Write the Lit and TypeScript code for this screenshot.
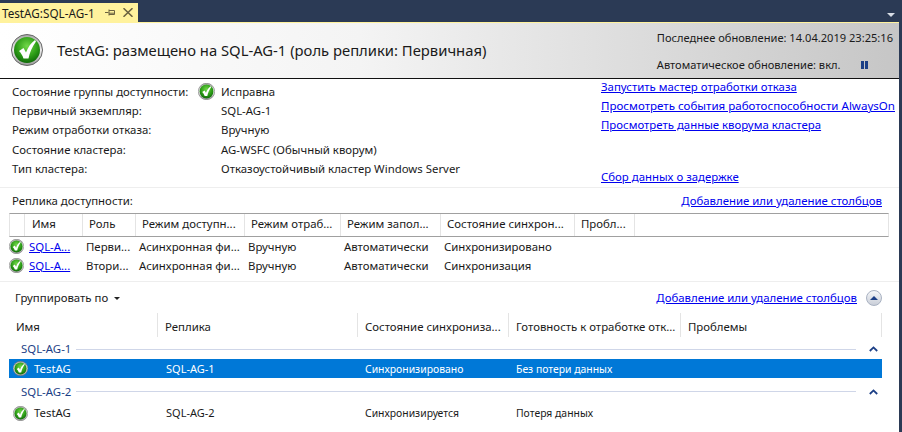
import { css, html, LitElement, svg } from 'lit';

const statusIcon = (size: number) => html`
  <svg class="status" width=${size} height=${size} viewBox="0 0 32 32">
    <defs>
      <radialGradient id="ok" cx="0.5" cy="0.35" r="0.65">
        <stop offset="0" stop-color="#72d84a" />
        <stop offset="0.6" stop-color="#2f9f18" />
        <stop offset="1" stop-color="#0f6b08" />
      </radialGradient>
      <linearGradient id="ring" x1="0" y1="0" x2="0" y2="1">
        <stop offset="0" stop-color="#a8a8a8" />
        <stop offset="0.5" stop-color="#ececec" />
        <stop offset="1" stop-color="#9a9a9a" />
      </linearGradient>
    </defs>
    <circle cx="16" cy="16" r="15.5" fill="url(#ring)" stroke="#666" stroke-width="1" />
    <circle cx="16" cy="16" r="13" fill="url(#ok)" />
    ${svg`<path d="M8 17l4.5-3 2.5 4.5C17 13 20 9 24 6l1 1.5C21 13 18.5 19 17.5 24.5h-5C11.5 21.5 10 19 8 17z" fill="#fff" />`}
  </svg>
`;

const chevronUp = html`
  <svg class="chevron" width="9" height="6" viewBox="0 0 9 6">
    <path d="M0.8 5L4.5 1.4 8.2 5" fill="none" stroke="#1c3f86" stroke-width="1.8" />
  </svg>
`;

const summary = [
  ['Состояние группы доступности:', 'Исправна', true],
  ['Первичный экземпляр:', 'SQL-AG-1', false],
  ['Режим отработки отказа:', 'Вручную', false],
  ['Состояние кластера:', 'AG-WSFC (Обычный кворум)', false],
  ['Тип кластера:', 'Отказоустойчивый кластер Windows Server', false],
] as const;

const replicaHead = ['Имя', 'Роль', 'Режим доступн...', 'Режим отраб...', 'Режим запол...', 'Состояние синхрон...', 'Пробл...'];
const replicaRows = [
  ['Перви...', 'Асинхронная фи...', 'Вручную', 'Автоматически', 'Синхронизировано'],
  ['Втори...', 'Асинхронная фи...', 'Вручную', 'Автоматически', 'Синхронизация'],
];
const dbHead = ['Имя', 'Реплика', 'Состояние синхрониза...', 'Готовность к отработке отк...', 'Проблемы'];

export class AppRoot extends LitElement {
  static styles = css`
    :host {
      display: block;
      width: 902px;
      height: 432px;
      overflow: hidden;
      background: #2b3a55;
      font-family: 'Noto Sans', sans-serif;
      font-size: 11.4px;
      line-height: 16px;
      color: #1a1a1a;
    }

    a {
      color: #0000ee;
      text-decoration: underline;
      white-space: nowrap;
    }

    svg {
      display: block;
      flex: none;
    }

    .tabbar {
      height: 22px;
      display: flex;
      align-items: flex-end;
      justify-content: space-between;
    }

    .tab {
      width: 138px;
      height: 19px;
      box-sizing: border-box;
      padding-left: 2px;
      display: flex;
      align-items: center;
      gap: 11px;
      background: #fff29d;
      font-size: 11.7px;
      white-space: nowrap;
    }

    .tab-icons {
      display: flex;
      align-items: center;
      gap: 8px;
      margin-left: -1px;
    }

    .menu-arrow {
      width: 0;
      height: 0;
      margin: 0 7px 5px 0;
      border-left: 4px solid transparent;
      border-right: 4px solid transparent;
      border-top: 4px solid #d8dde6;
    }

    .page {
      width: 899px;
      height: 410px;
      background: #fff;
      border-top: 1px solid #fff29d;
      box-sizing: border-box;
    }

    .banner {
      height: 56px;
      box-sizing: border-box;
      display: flex;
      align-items: stretch;
      justify-content: space-between;
      padding: 0 6px 0 11px;
      border-bottom: 1px solid #111;
      background: linear-gradient(90deg, #ffffff 0%, #f4f4f4 40%, #c6c6c6 100%);
    }

    .banner-title {
      display: flex;
      align-items: center;
      gap: 14px;
      font-size: 14.8px;
      padding-bottom: 2px;
      white-space: nowrap;
    }

    .banner-info {
      padding-top: 7px;
      display: flex;
      flex-direction: column;
      gap: 11px;
      font-size: 11.1px;
      white-space: nowrap;
    }

    .auto {
      display: flex;
      align-items: center;
      gap: 20px;
    }

    .pause {
      width: 7px;
      height: 8px;
      box-sizing: border-box;
      border-left: 3px solid #1c3f86;
      border-right: 3px solid #1c3f86;
    }

    .overview {
      height: 109px;
      box-sizing: border-box;
      display: flex;
      justify-content: space-between;
      padding: 0 5px 0 12px;
      border-bottom: 1px solid #eee;
    }

    .facts {
      padding-top: 3px;
      display: grid;
      grid-template-columns: 209px 1fr;
      grid-auto-rows: 19.4px;
      align-items: center;
      align-content: start;
      white-space: nowrap;
    }

    .fact-value {
      display: flex;
      align-items: center;
    }

    .fact-label {
      position: relative;
    }

    .fact-icon {
      position: absolute;
      left: 186px;
      top: -1px;
    }

    .actions {
      width: 293px;
      display: flex;
      flex-direction: column;
      gap: 3px;
      font-size: 11.4px;
    }

    .actions .wide {
      font-size: 11.55px;
    }

    .actions .late {
      margin-top: 33px;
    }

    .replicas {
      height: 94px;
      box-sizing: border-box;
      padding: 5px 10px 0 9px;
      border-bottom: 1px solid #eee;
    }

    .section-head {
      display: flex;
      justify-content: space-between;
      padding: 0 7px 0 3px;
      height: 20px;
    }

    .replica-grid {
      display: grid;
      grid-template-columns: 15px 58px 53px 109px 96px 100px 134px 60px 1fr;
      white-space: nowrap;
    }

    .replica-head {
      height: 24px;
      box-sizing: border-box;
      align-items: center;
      border-top: 1px solid #a0a0a0;
      border-bottom: 1px solid #a0a0a0;
      border-left: 1px solid #e4e4e4;
      border-right: 1px solid #e4e4e4;
    }

    .replica-head > div {
      height: 100%;
      box-sizing: border-box;
      padding: 2px 0 0 6px;
      border-right: 1px solid #e4e4e4;
    }

    .replica-head > div:first-child + div {
      padding-left: 7px;
    }

    .replica-head > div:last-child {
      border-right: 0;
    }

    .replica-row {
      height: 19px;
      align-items: center;
    }

    .replica-row > div {
      padding-left: 4px;
    }

    .replica-row > .icon-cell {
      padding-left: 0;
    }

    .replica-row > .link-cell {
      padding-left: 5px;
    }

    .databases {
      padding: 6px 17px 0 9px;
    }

    .db-toolbar {
      height: 20px;
      display: flex;
      justify-content: space-between;
      align-items: center;
      padding-left: 6px;
    }

    .group-by {
      display: flex;
      align-items: center;
      gap: 6px;
    }

    .caret {
      width: 0;
      height: 0;
      border-left: 3px solid transparent;
      border-right: 3px solid transparent;
      border-top: 3px solid #222;
    }

    .db-links {
      display: flex;
      align-items: center;
      gap: 9px;
    }

    .collapse {
      width: 16px;
      height: 16px;
      border-radius: 50%;
      box-sizing: border-box;
      border: 1px solid #a9b2c2;
      background: linear-gradient(#f6f7f9, #c9ced8);
      display: flex;
      align-items: center;
      justify-content: center;
    }

    .collapse span {
      width: 0;
      height: 0;
      border-left: 4px solid transparent;
      border-right: 4px solid transparent;
      border-bottom: 4px solid #1c3f86;
    }

    .db-grid {
      display: grid;
      grid-template-columns: 149px 200px 151px 172px 201px;
      white-space: nowrap;
    }

    .db-head {
      height: 27px;
      margin-top: 3px;
      align-items: center;
    }

    .db-head > div {
      height: 24px;
      box-sizing: border-box;
      padding: 6px 0 0 7px;
      border-right: 1px solid #e4e4e4;
    }

    .group {
      height: 20px;
      margin-top: 1px;
      display: flex;
      align-items: center;
      color: #1c3f86;
      padding-left: 12px;
      gap: 5px;
    }

    .group.next {
      height: 19px;
      margin-top: 4px;
    }

    .group hr {
      flex: 1;
      height: 1px;
      margin: 0;
      border: 0;
      background: #cfd6e8;
    }

    .group .chevron {
      margin: 0 4px 0 8px;
    }

    .db-row {
      height: 19px;
      align-items: center;
    }

    .db-row.selected {
      background: #0078d7;
      color: #fff;
    }

    .db-row > div {
      padding-left: 7px;
    }

    .db-row > .replica {
      font-size: 11px;
      padding-left: 8px;
    }

    .db-row > .status-text {
      font-size: 10.4px;
    }

    .db-row > .name {
      padding-left: 4px;
      display: flex;
      align-items: center;
      gap: 6px;
    }

    .db-row.second {
      height: 24px;
    }
  `;

  private dbRow(replica: string, sync: string, ready: string, selected: boolean) {
    return html`
      <div class="db-grid db-row ${selected ? 'selected' : 'second'}">
        <div class="name">${statusIcon(15)}<span>TestAG</span></div>
        <div class="replica">${replica}</div>
        <div class="status-text">${sync}</div>
        <div class="status-text">${ready}</div>
        <div></div>
      </div>
    `;
  }

  render() {
    return html`
      <div class="tabbar">
        <div class="tab">
          <span>TestAG:SQL-AG-1</span>
          <span class="tab-icons">
            <svg width="10" height="9" viewBox="0 0 10 9">
              <path d="M0 4.5h3.5M4 1.5v6M4 2.5h5.5v4h-5.5M4 5.2h5.5" fill="none" stroke="#6b6240" />
            </svg>
            <svg width="10" height="9" viewBox="0 0 10 9">
              <path d="M0.5 0.2l9 8.6M9.5 0.2l-9 8.6" stroke="#6b6240" stroke-width="1.5" />
            </svg>
          </span>
        </div>
        <div class="menu-arrow"></div>
      </div>
      <div class="page">
        <div class="banner">
          <div class="banner-title">
            ${statusIcon(32)}
            <span>TestAG: размещено на SQL-AG-1 (роль реплики: Первичная)</span>
          </div>
          <div class="banner-info">
            <div>Последнее обновление: 14.04.2019 23:25:16</div>
            <div class="auto">
              <span>Автоматическое обновление: вкл.</span>
              <span class="pause"></span>
            </div>
          </div>
        </div>
        <div class="overview">
          <div class="facts">
            ${summary.map(
              ([label, value, ok]) => html`
                <div class="fact-label">
                  ${label}
                  ${ok ? html`<span class="fact-icon">${statusIcon(17)}</span>` : ''}
                </div>
                <div class="fact-value">${value}</div>
              `,
            )}
          </div>
          <div class="actions">
            <a href="#">Запустить мастер отработки отказа</a>
            <a class="wide" href="#">Просмотреть события работоспособности AlwaysOn</a>
            <a href="#">Просмотреть данные кворума кластера</a>
            <a class="late" href="#">Сбор данных о задержке</a>
          </div>
        </div>
        <div class="replicas">
          <div class="section-head">
            <span>Реплика доступности:</span>
            <a href="#">Добавление или удаление столбцов</a>
          </div>
          <div class="replica-grid replica-head">
            <div></div>
            ${replicaHead.map((h) => html`<div>${h}</div>`)}
            <div></div>
          </div>
          ${replicaRows.map(
            (row) => html`
              <div class="replica-grid replica-row">
                <div class="icon-cell">${statusIcon(15)}</div>
                <div class="link-cell"><a href="#">SQL-A...</a></div>
                ${row.map((cell) => html`<div>${cell}</div>`)}
              </div>
            `,
          )}
        </div>
        <div class="databases">
          <div class="db-toolbar">
            <div class="group-by"><span>Группировать по</span><span class="caret"></span></div>
            <div class="db-links">
              <a href="#">Добавление или удаление столбцов</a>
              <span class="collapse"><span></span></span>
            </div>
          </div>
          <div class="db-grid db-head">
            ${dbHead.map((h) => html`<div>${h}</div>`)}
          </div>
          <div class="group">SQL-AG-1 <hr />${chevronUp}</div>
          ${this.dbRow('SQL-AG-1', 'Синхронизировано', 'Без потери данных', true)}
          <div class="group next">SQL-AG-2 <hr />${chevronUp}</div>
          ${this.dbRow('SQL-AG-2', 'Синхронизируется', 'Потеря данных', false)}
        </div>
      </div>
    `;
  }
}

if (!customElements.get('app-root')) {
  customElements.define('app-root', AppRoot);
}
